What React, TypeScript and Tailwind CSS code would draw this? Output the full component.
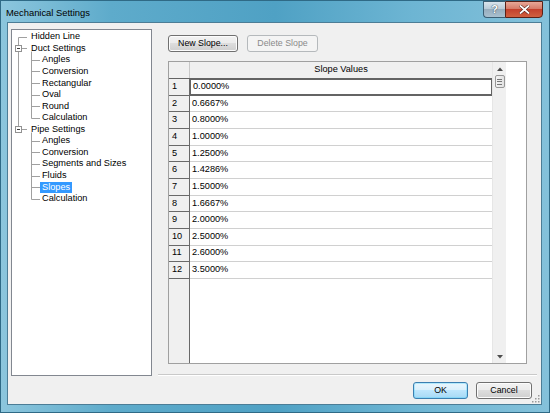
import React from "react";

const ROW_H = 11.57;
const GRID_ROW_H = 16.67;

type TreeItem = { label: string; level: 0 | 1; box?: boolean; selected?: boolean };

const tree: TreeItem[] = [
  { label: "Hidden Line", level: 0 },
  { label: "Duct Settings", level: 0, box: true },
  { label: "Angles", level: 1 },
  { label: "Conversion", level: 1 },
  { label: "Rectangular", level: 1 },
  { label: "Oval", level: 1 },
  { label: "Round", level: 1 },
  { label: "Calculation", level: 1 },
  { label: "Pipe Settings", level: 0, box: true },
  { label: "Angles", level: 1 },
  { label: "Conversion", level: 1 },
  { label: "Segments and Sizes", level: 1 },
  { label: "Fluids", level: 1 },
  { label: "Slopes", level: 1, selected: true },
  { label: "Calculation", level: 1 },
];

const slopes = [
  "0.0000%",
  "0.6667%",
  "0.8000%",
  "1.0000%",
  "1.2500%",
  "1.4286%",
  "1.5000%",
  "1.6667%",
  "2.0000%",
  "2.5000%",
  "2.6000%",
  "3.5000%",
];

const font = { fontFamily: '"Liberation Sans", Arial, sans-serif' };

// connector lines of the tree, drawn over the white list box
function TreeLines() {
  const cy = (i: number) => Math.round(1 + ROW_H * i + ROW_H / 2) + 0.5;
  const mainX = 6.5;
  const childX = 19.5;
  const lines: React.ReactNode[] = [];
  // main trunk: Hidden Line -> Pipe Settings box
  lines.push(<line key="trunk" x1={mainX} y1={cy(0)} x2={mainX} y2={cy(8) - 3} />);
  lines.push(<line key="h0" x1={mainX} y1={cy(0)} x2={15} y2={cy(0)} />);
  [1, 8].forEach((r) => {
    lines.push(<line key={"hb" + r} x1={mainX + 3} y1={cy(r)} x2={15} y2={cy(r)} />);
  });
  // children of Duct and Pipe
  [
    [2, 7],
    [9, 14],
  ].forEach(([a, b]) => {
    lines.push(<line key={"v" + a} x1={childX} y1={cy(a - 1) + 3} x2={childX} y2={cy(b)} />);
    for (let r = a; r <= b; r++) {
      lines.push(<line key={"hc" + r} x1={childX} y1={cy(r)} x2={28} y2={cy(r)} />);
    }
  });
  return (
    <svg className="pointer-events-none absolute left-0 top-0" width="139" height="345">
      <g stroke="#a0a0a0" strokeWidth="1">{lines}</g>
      {[1, 8].map((r) => (
        <g key={"box" + r}>
          <rect x={mainX - 3} y={cy(r) - 3} width="6" height="6" fill="#fff" stroke="#919191" />
          <line x1={mainX - 1.5} y1={cy(r)} x2={mainX + 1.5} y2={cy(r)} stroke="#3c3c3c" />
        </g>
      ))}
    </svg>
  );
}

function WinButton({
  children,
  width,
  disabled,
  focused,
}: {
  children: React.ReactNode;
  width: string;
  disabled?: boolean;
  focused?: boolean;
}) {
  if (disabled) {
    return (
      <div
        className={`${width} flex h-[17px] items-center justify-center rounded-[3px] border border-[#b5b9bc] bg-[#f4f4f4] text-[8.8px] text-[#8a8a8a]`}
      >
        {children}
      </div>
    );
  }
  return (
    <div
      className={`${width} flex h-[17px] items-center justify-center rounded-[3px] border text-[8.8px] text-black ${
        focused
          ? "border-[#3c7fb1] bg-[linear-gradient(#eaf6fd_0%,#d9f0fc_50%,#bee6fd_50%,#a7d9f5_100%)] shadow-[inset_0_0_0_1px_#48d2fb55]"
          : "border-[#707070] bg-[linear-gradient(#f2f2f2_0%,#ebebeb_50%,#dddddd_50%,#cfcfcf_100%)] shadow-[inset_0_0_0_1px_#fcfcfc]"
      }`}
    >
      {children}
    </div>
  );
}

function SlopeGrid() {
  return (
    <div className="flex h-[303px] w-[359px] border border-[#a0a0a0] bg-white">
      <div className="flex w-[323px] flex-col">
        {/* header */}
        <div className="flex h-[17px] border-b border-[#646464] bg-[#f0f0f0]">
          <div className="w-[21px] border-r border-[#c8c8c8]" />
          <div className="flex flex-1 items-center justify-center text-[9.2px] text-black">
            Slope Values
          </div>
        </div>
        {slopes.map((v, i) => (
          <div key={v} className="flex shrink-0" style={{ height: GRID_ROW_H }}>
            <div className="flex w-[21px] items-center border-b border-r border-[#696969] bg-[#f0f0f0] pl-[3px] text-[9.2px] text-black">
              {i + 1}
            </div>
            <div
              className={`flex flex-1 items-center pl-[2px] text-[9.2px] text-black ${
                i === 0 ? "border border-[#646464] border-b-2" : "border-b border-[#d0d0d0]"
              }`}
            >
              {v}
            </div>
          </div>
        ))}
        <div className="flex flex-1">
          <div className="w-[21px] border-r border-[#696969] bg-[#f0f0f0]" />
          <div className="flex-1 bg-white" />
        </div>
      </div>
      {/* vertical scrollbar */}
      <div className="flex w-[14px] flex-col items-center border-l border-[#e6e6e6] bg-[#f0f0f0]">
        <div className="flex h-[13px] w-full items-center justify-center">
          <svg width="6" height="4" viewBox="0 0 6 4">
            <path d="M0 4 L3 0.5 L6 4 Z" fill="#4d4d4d" />
          </svg>
        </div>
        <div className="flex h-[13px] w-[10px] flex-col items-center justify-center gap-[1.5px] rounded-[2px] border border-[#979797] bg-[linear-gradient(90deg,#f3f3f3,#e2e2e2)]">
          <div className="h-px w-[5px] bg-[#777]" />
          <div className="h-px w-[5px] bg-[#777]" />
          <div className="h-px w-[5px] bg-[#777]" />
        </div>
        <div className="flex-1" />
        <div className="flex h-[13px] w-full items-center justify-center">
          <svg width="6" height="4" viewBox="0 0 6 4">
            <path d="M0 0 L6 0 L3 3.5 Z" fill="#4d4d4d" />
          </svg>
        </div>
      </div>
    </div>
  );
}

export default function App() {
  return (
    <div
      className="flex h-[413px] w-[550px] flex-col overflow-hidden border border-[#2f6a86] bg-[linear-gradient(90deg,#8cc6dd_0%,#5eabcb_20%,#4fa1c4_50%,#6db5d3_75%,#84c1da_100%)]"
      style={font}
    >
      {/* title bar */}
      <div className="flex h-[21px] shrink-0 items-start justify-between">
        <div className="pl-[5px] pt-[5px] text-[9.4px] text-black">Mechanical Settings</div>
        <div className="mr-[6px] flex h-[17px] items-stretch">
          <div className="flex w-[22px] items-center justify-center rounded-bl-[4px] border border-r-0 border-[#3b5e73] bg-[linear-gradient(#d8e4ec_0%,#b6c8d5_50%,#97adbd_50%,#a9c0cf_100%)] text-[11px] font-bold text-white [text-shadow:0_0_1px_#34495a,0_0_1px_#34495a]">
            ?
          </div>
          <div className="flex w-[38px] items-center justify-center rounded-br-[4px] border border-[#5a2117] bg-[linear-gradient(#e8a898_0%,#d77b68_45%,#c4412c_50%,#d0603f_100%)]">
            <svg width="11" height="9" viewBox="0 0 11 9">
              <path d="M1 0.5 L5.5 4.5 L10 0.5 M1 8.5 L5.5 4.5 L10 8.5" stroke="#4a1a12" strokeWidth="3" fill="none" />
              <path d="M1 0.5 L5.5 4.5 L10 0.5 M1 8.5 L5.5 4.5 L10 8.5" stroke="#ffffff" strokeWidth="1.8" fill="none" />
            </svg>
          </div>
        </div>
      </div>

      {/* client area */}
      <div className="relative mb-[7px] ml-[6px] mr-[7px] flex flex-1 border border-[#4c7d96] bg-[#f0f0f0]">
        {/* tree */}
        <div className="pl-[3px] pt-[6px]">
          <div className="relative h-[347px] w-[141px] border border-[#828790] bg-white pt-px">
            <TreeLines />
            {tree.map((t, i) => (
              <div
                key={i}
                className="flex items-center text-[9.2px] text-black"
                style={{ height: ROW_H, paddingLeft: t.level === 0 ? 17 : 28 }}
              >
                <span
                  className={`px-[2px] leading-[11px] ${t.selected ? "bg-[#3399ff] text-white" : ""}`}
                >
                  {t.label}
                </span>
              </div>
            ))}
          </div>
        </div>

        {/* right side */}
        <div className="ml-[6px] flex flex-1 flex-col">
          <div className="flex flex-col pl-[10px] pt-[12px]">
            <div className="flex gap-[9px]">
              <WinButton width="w-[70px]">New Slope...</WinButton>
              <WinButton width="w-[71px]" disabled>
                Delete Slope
              </WinButton>
            </div>
            <div className="mt-[9px]">
              <SlopeGrid />
            </div>
          </div>
          <div className="mr-[4px] mt-[10px] h-px bg-[#c9c9c9]" />
          <div className="mr-[4px] h-px bg-white" />
          <div className="mt-[6px] flex justify-end gap-[8px] pr-[9px]">
            <WinButton width="w-[55px]" focused>
              OK
            </WinButton>
            <WinButton width="w-[56px]">Cancel</WinButton>
          </div>
        </div>

        {/* size grip */}
        <svg className="absolute bottom-[1px] right-[1px]" width="9" height="9" viewBox="0 0 9 9">
          {[
            [7, 1],
            [7, 4],
            [4, 4],
            [7, 7],
            [4, 7],
            [1, 7],
          ].map(([x, y]) => (
            <rect key={`${x}-${y}`} x={x} y={y} width="1.5" height="1.5" fill="#9a9a9a" />
          ))}
        </svg>
      </div>
    </div>
  );
}
